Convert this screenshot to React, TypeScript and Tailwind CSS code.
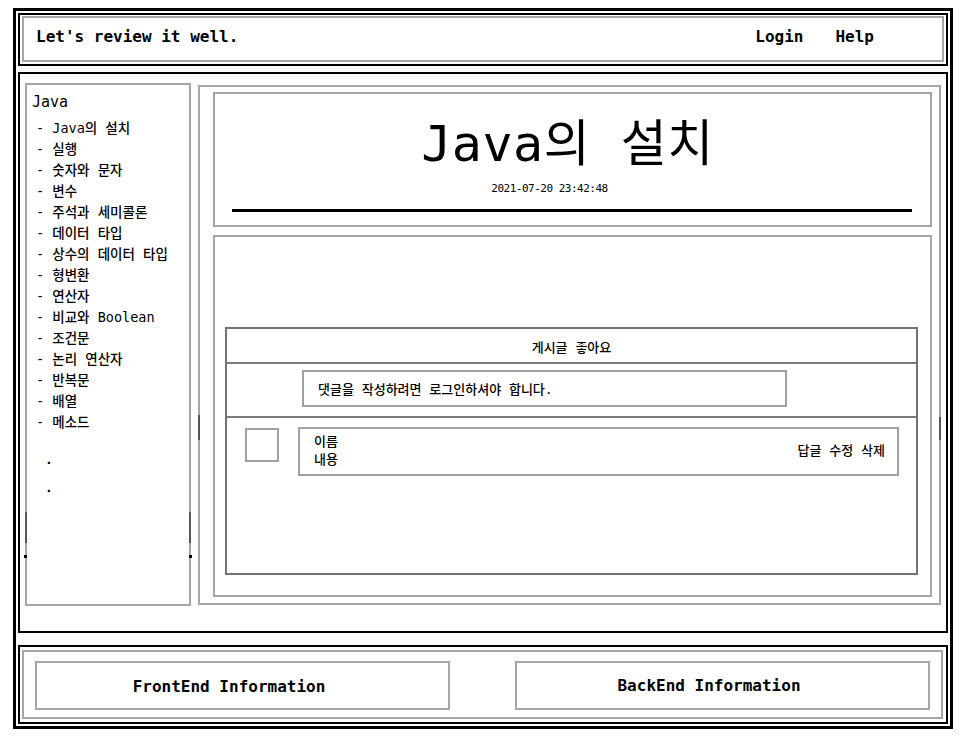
import React from "react";

const items = [
  "Java의 설치",
  "실행",
  "숫자와 문자",
  "변수",
  "주석과 세미콜론",
  "데이터 타입",
  "상수의 데이터 타입",
  "형변환",
  "연산자",
  "비교와 Boolean",
  "조건문",
  "논리 연산자",
  "반복문",
  "배열",
  "메소드",
];

export default function App() {
  return (
    <div className="w-[960px] h-[743px] bg-white text-black overflow-hidden font-medium font-['DejaVu_Sans_Mono','Noto_Sans_CJK_KR',monospace]">
      <div className="ml-[13px] mt-[8px] w-[940px] h-[721px] border-[3px] border-black px-[2px] pt-[2px] flex flex-col">
        {/* Header */}
        <div className="h-[53px] shrink-0 border-2 border-black pl-[2px] pr-[2px] pt-[1px] pb-[2px] flex">
          <div className="flex-1 border-2 border-[#a6a6a6] flex items-center pl-[12px] pr-[68px] pb-[4px]">
            <span className="text-[16px] leading-[20px] font-bold">Let's review it well.</span>
            <div className="ml-auto flex gap-[32px] text-[16px] leading-[20px] font-bold">
              <span>Login</span>
              <span>Help</span>
            </div>
          </div>
        </div>

        {/* Main */}
        <div className="mt-[6px] h-[561px] shrink-0 border-2 border-black flex items-start pl-[5px]">
          {/* Sidebar */}
          <div className="relative mt-[9px] w-[166px] h-[523px] border-2 border-[#a6a6a6] pl-[5px] pt-[7px]">
            <div className="text-[15px] leading-[21px] font-normal">Java</div>
            <ul className="mt-[5px] pl-[4px] text-[13.5px] leading-[21px]">
              {items.map((t) => (
                <li key={t} className="whitespace-pre">{"- " + t}</li>
              ))}
            </ul>
            <div className="mt-[13px] pl-[13px] text-[13px] leading-[28px] font-bold">
              <div>.</div>
              <div>.</div>
            </div>
            <span className="absolute left-[-2px] top-[427px] w-[2px] h-[31px] bg-[#555]" />
            <span className="absolute right-[-2px] top-[427px] w-[2px] h-[31px] bg-[#555]" />
            <span className="absolute left-[-3px] top-[470px] w-[3px] h-[3px] bg-black" />
            <span className="absolute right-[-3px] top-[470px] w-[3px] h-[3px] bg-black" />
          </div>

          {/* Content */}
          <div className="relative ml-[7px] mt-[11px] w-[743px] h-[520px] border-2 border-[#a6a6a6] pl-[13px] pt-[5px]">
            <span className="absolute left-[-2px] top-[328px] w-[2px] h-[25px] bg-[#555]" />
            <span className="absolute right-[-2px] top-[330px] w-[2px] h-[23px] bg-[#555]" />

            {/* Title box */}
            <div className="w-[719px] h-[135px] border-2 border-[#a6a6a6] pt-[25px]">
              <div className="text-center text-[50px] leading-[50px] tracking-[0.5px] font-normal pr-[10px]">Java의 설치</div>
              <div className="mt-[14px] text-center text-[11px] leading-[11px] tracking-[-0.5px] font-normal pr-[46px]">
                2021-07-20 23:42:48
              </div>
              <div className="mt-[15px] ml-[17px] w-[680px] h-[3px] bg-black" />
            </div>

            {/* Comment area */}
            <div className="mt-[8px] w-[719px] h-[362px] border-2 border-[#a6a6a6] pl-[10px] pt-[90px]">
              <div className="w-[693px] h-[248px] border-2 border-[#727272] flex flex-col">
                <div className="h-[35px] shrink-0 border-b-2 border-[#7a7a7a] flex items-center justify-center pt-[4px] text-[13px] leading-[16px]">
                  게시글 좋아요
                </div>
                <div className="h-[54px] shrink-0 border-b-2 border-[#7a7a7a] pl-[75px] pt-[6px]">
                  <div className="w-[485px] h-[37px] border-2 border-[#a0a0a0] flex items-center pl-[14px] pt-[3px] text-[13px] leading-[16px]">
                    댓글을 작성하려면 로그인하셔야 합니다.
                  </div>
                </div>
                <div className="flex items-start pl-[18px]">
                  <div className="mt-[10px] w-[34px] h-[34px] border-2 border-[#a0a0a0]" />
                  <div className="mt-[9px] ml-[19px] w-[601px] h-[49px] border-2 border-[#a0a0a0] flex items-start pl-[14px] pr-[12px] pt-[4px] text-[13px] leading-[18px]">
                    <div>
                      <div>이름</div>
                      <div>내용</div>
                    </div>
                    <div className="ml-auto mt-[9px]">답글 수정 삭제</div>
                  </div>
                </div>
              </div>
            </div>
          </div>
        </div>

        {/* Footer */}
        <div className="mt-[12px] h-[79px] shrink-0 border-2 border-black pl-[2px] pr-[3px] pt-[3px] pb-[3px]">
          <div className="h-full border-2 border-[#a6a6a6] grid grid-cols-2 gap-[65px] px-[11px] pt-[9px]">
            <div className="h-[49px] border-2 border-[#a6a6a6] flex items-center justify-center pr-[27px] pt-[2px] text-[16px] leading-[20px] font-bold">
              FrontEnd Information
            </div>
            <div className="h-[49px] border-2 border-[#a6a6a6] flex items-center justify-center pr-[27px] text-[16px] leading-[20px] font-bold">
              BackEnd Information
            </div>
          </div>
        </div>
      </div>
    </div>
  );
}
